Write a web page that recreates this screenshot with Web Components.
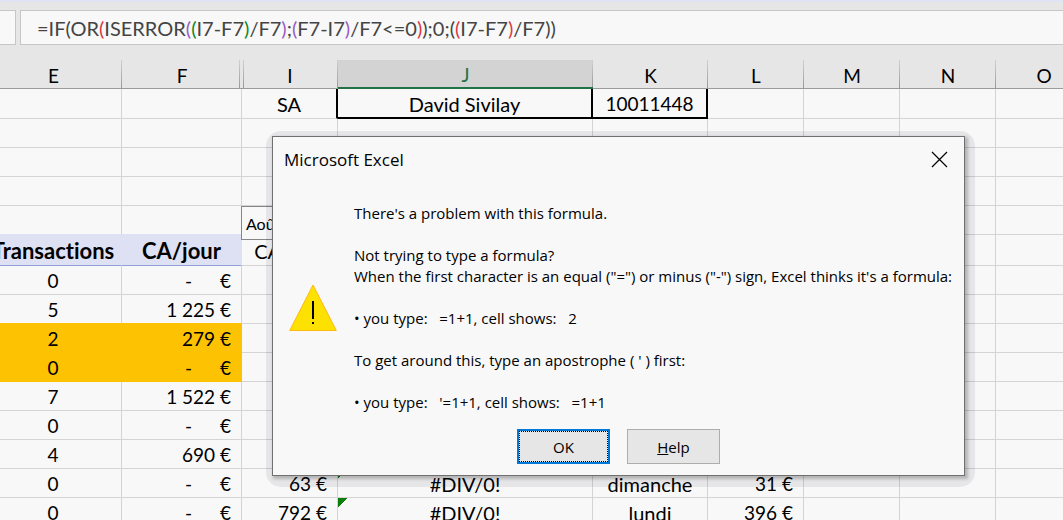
<!DOCTYPE html>
<html lang="en">
<head>
<meta charset="utf-8">
<title>Excel</title>
<style>
  body {
    margin: 0;
    height: 100vh;
    overflow: hidden;
    background: #f8f8f8;
    font-family: Lato, "Liberation Sans", sans-serif;
    font-variant-ligatures: none;
    color: #000;
  }
</style>
</head>
<body>
<excel-window>
  <formula-bar slot="bar" formula="=IF(OR(ISERROR((I7-F7)/F7);(F7-I7)/F7&lt;=0));0;((I7-F7)/F7))"></formula-bar>
  <sheet-grid></sheet-grid>
  <message-box slot="dialog" heading="Microsoft Excel">
    <p>There's a problem with this formula.</p>
    <p>Not trying to type a formula?<br>When the first character is an equal ("=") or minus ("-") sign, Excel thinks it's a formula:</p>
    <p>• you type:   =1+1, cell shows:   2</p>
    <p>To get around this, type an apostrophe ( ' ) first:</p>
    <p>• you type:   '=1+1, cell shows:   =1+1</p>
    <dialog-button slot="actions" primary>OK</dialog-button>
    <dialog-button slot="actions"><u>H</u>elp</dialog-button>
  </message-box>
</excel-window>

<script>
function attach(element, html) {
    const template = document.createElement('template');
    template.innerHTML = html;
    const root = element.attachShadow({mode: 'open'});
    root.appendChild(template.content.cloneNode(true));
    return root;
}

class ExcelWindow extends HTMLElement {
    constructor() {
        super();
        attach(this, `
<style>
  :host {
    display: flex;
    flex-direction: column;
    position: relative;
    height: 100%;
    overflow: hidden;
    background: #f8f8f8;
  }
  main { flex: 1; min-height: 0; overflow: hidden; }
</style>
<slot name="bar"></slot>
<main><slot></slot></main>
<slot name="dialog"></slot>`);
    }
}

class FormulaBar extends HTMLElement {
    constructor() {
        super();
        this._root = attach(this, `
<style>
  :host {
    display: flex;
    gap: 4px;
    padding: 8px 0 15px;
    border-top: 2px solid #dfe3f4;
    background: #e6e6e6;
  }
  input, .formula {
    box-sizing: border-box;
    height: 35px;
    border: 1px solid #c6c6c6;
    background: #f8f8f8;
  }
  input {
    width: 16px;
    padding: 0;
    border-left: 0;
    border-radius: 0;
  }
  .formula {
    flex: 1;
    padding-left: 16px;
    border-right: 0;
    font-size: 20px;
    line-height: 34px;
    white-space: pre;
    color: #444;
    outline: none;
  }
  .red { color: #d83a44; }
  .purple { color: #9a5cc6; }
  .green { color: #0b8a2a; }
</style>
<input aria-label="Name box">
<div class="formula" role="textbox" aria-label="Formula" contenteditable="true" spellcheck="false"></div>`);
    }

    connectedCallback() {
        // Each nesting level of brackets has its own colour
        const colors = ['', 'red', 'purple', 'green'];
        const box = this._root.querySelector('.formula');
        let depth = 0;

        for (const part of this.getAttribute('formula').split(/([()])/)) {
            const span = document.createElement('span');
            span.textContent = part;
            if (part === '(') {
                span.className = colors[depth++];
            } else if (part === ')') {
                span.className = colors[--depth];
            }
            box.appendChild(span);
        }
    }
}

const COLUMNS = ['E', 'F', 'I', 'J', 'K', 'L', 'M', 'N', 'O'];

// [row class, {column: text}]
const ROWS = [
    ['first', {I: 'SA', J: 'David Sivilay', K: '10011448'}],
    ['', {}],
    ['', {}],
    ['', {}],
    ['above', {}],
    ['titles', {E: 'Transactions', F: 'CA/jour', I: 'CA/jour'}],
    ['', {E: '0', F: '-'}],
    ['over', {E: '5', F: '1 225'}],
    ['marked', {E: '2', F: '279'}],
    ['marked', {E: '0', F: '-'}],
    ['', {E: '7', F: '1 522'}],
    ['', {E: '0', F: '-'}],
    ['', {E: '4', F: '690'}],
    ['error', {E: '0', F: '-', I: '63', J: '#DIV/0!', K: 'dimanche', L: '31'}],
    ['error', {E: '0', F: '-', I: '792', J: '#DIV/0!', K: 'lundi', L: '396'}],
];

class SheetGrid extends HTMLElement {
    constructor() {
        super();
        this._root = attach(this, `
<style>
  :host { display: block; position: relative; }
  table {
    margin-left: -15px;
    width: 1107px;
    min-width: calc(100% + 15px);
    table-layout: fixed;
    border-collapse: separate;
    border-spacing: 0;
    font-size: 20px;
    line-height: 26px;
    text-align: center;
    white-space: nowrap;
  }
  .E { width: 137px; }
  .F { width: 120px; }
  .I, .L, .M, .N { width: 96px; }
  .J { width: 255px; }
  .K { width: 115px; }
  th, td { box-sizing: border-box; padding: 1px 0 0; }
  th {
    height: 29px;
    padding-top: 3px;
    border-bottom: 1px solid #9b9b9b;
    background: linear-gradient(#d0d0d0, #999) right / 1px 100% no-repeat #e6e6e6;
    font-size: 19px;
    font-weight: 400;
    line-height: 24px;
  }
  /* G and H are hidden, so F and I meet in a double rule */
  th.F { background-position: right 2px top; }
  th.I {
    background:
      linear-gradient(#d0d0d0, #999) left 1px top / 1px 100% no-repeat,
      linear-gradient(#d0d0d0, #999) right / 1px 100% no-repeat #e6e6e6;
  }
  th.J {
    border-bottom: 2px solid #217346;
    background-color: #d3d3d3;
    color: #217346;
  }
  td {
    height: 29px;
    border-right: 1px solid #d4d4d4;
    border-bottom: 1px solid #d4d4d4;
  }
  .first td { height: 30px; }
  .first .I { border-right: 2px solid #000; }
  .first .J, .first .K {
    border-right: 2px solid #000;
    border-bottom: 2px solid #000;
  }
  .above .E, .above .F { border-bottom-color: #dde1f3; }
  .titles td { height: 31px; padding-top: 2px; }
  .titles .E, .titles .F {
    border-right-color: #dde1f3;
    border-bottom-color: #8ea2d8;
    background: #dde1f3;
    font-size: 22px;
    font-weight: 700;
  }
  .over .E, .over .F { border-bottom-color: #fdc303; }
  .marked .E, .marked .F { border-color: #fdc303; background: #fdc303; }
  td.money, tbody .E, .first .K { padding-top: 2px; font-size: 19px; }
  td.money { padding-right: 10px; text-align: right; }
  .dash { margin-right: 23px; }
  .error .J {
    background: linear-gradient(135deg, #0a7d0a 50%, transparent 50%) left top / 9px 9px no-repeat;
  }
  .tag {
    position: absolute;
    left: 241px;
    top: 146px;
    box-sizing: border-box;
    width: 96px;
    height: 34px;
    padding-left: 4px;
    border: 1px solid #868686;
    background: #f8f8f8;
    font-size: 16px;
    line-height: 34px;
  }
</style>
<table>
  <thead><tr></tr></thead>
  <tbody></tbody>
</table>
<div class="tag">Août</div>`);
    }

    connectedCallback() {
        const head = this._root.querySelector('thead tr');
        for (const name of COLUMNS) {
            const th = document.createElement('th');
            th.scope = 'col';
            th.className = name;
            th.textContent = name;
            head.appendChild(th);
        }

        const body = this._root.querySelector('tbody');
        for (const [kind, values] of ROWS) {
            const tr = document.createElement('tr');
            tr.className = kind;
            for (const name of COLUMNS) {
                tr.appendChild(this._cell(name, values[name] || ''));
            }
            body.appendChild(tr);
        }
    }

    _cell(name, text) {
        const td = document.createElement('td');
        td.className = name;
        if ('FIL'.includes(name) && /^[-\d]/.test(text)) {
            td.classList.add('money');
            td.innerHTML = text === '-' ? '<span class="dash">-</span> €' : text + ' €';
        } else {
            td.textContent = text;
        }
        return td;
    }
}

class MessageBox extends HTMLElement {
    constructor() {
        super();
        this._root = attach(this, `
<style>
  :host {
    display: block;
    position: absolute;
    left: 272px;
    top: 136px;
    z-index: 1;
    font-family: "Open Sans", "Noto Sans", sans-serif;
  }
  /* stepped shadow that falls down and to the right */
  :host::before {
    content: "";
    position: absolute;
    inset: -5px -10px -11px -6px;
    border-radius: 15px;
    background: rgba(30, 30, 50, .08);
  }
  section {
    position: relative;
    box-sizing: border-box;
    width: 693px;
    padding-bottom: 11px;
    border: 1px solid #707070;
    background: #f8f8f8;
    box-shadow: 2px 2px 3px 1px rgba(0, 0, 0, .22);
  }
  header {
    display: flex;
    justify-content: space-between;
    align-items: center;
    height: 44px;
    padding: 0 16px 0 11px;
  }
  h1 { margin: 0; font-size: 17px; font-weight: 400; }
  .close {
    display: flex;
    padding: 0;
    border: 0;
    background: none;
  }
  .content {
    display: flex;
    align-items: center;
    gap: 17px;
    padding: 22px 0 16px 16px;
  }
  .text { font-size: 15px; line-height: 21px; white-space: pre; }
  ::slotted(p) { margin: 0 0 21px; }
  ::slotted(p:last-of-type) { margin: 0; }
  svg { flex: none; }
  footer { display: flex; justify-content: center; gap: 17px; }
</style>
<section role="alertdialog" aria-labelledby="heading">
  <header>
    <h1 id="heading"></h1>
    <button class="close" aria-label="Close">
      <svg width="17" height="17" viewBox="0 0 17 17" stroke="#000" stroke-width="1.2"><path d="M1 1l15 15M16 1L1 16"/></svg>
    </button>
  </header>
  <div class="content">
    <svg width="48" height="48" viewBox="0 0 48 48">
      <path d="M24 1L47.300 46.500H.700z" fill="#fde100" stroke="#fdb913"/>
      <path d="M23 17h2v18h-2zM23 38h2v2h-2z"/>
    </svg>
    <div class="text"><slot></slot></div>
  </div>
  <footer><slot name="actions"></slot></footer>
</section>`);
    }

    connectedCallback() {
        this._root.querySelector('h1').textContent = this.getAttribute('heading');
        // Whitespace between the paragraphs would be kept by white-space: pre
        for (const node of [...this.childNodes]) {
            if (node.nodeType === Node.TEXT_NODE) {
                node.remove();
            }
        }
    }
}

class DialogButton extends HTMLElement {
    constructor() {
        super();
        attach(this, `
<style>
  :host { display: block; }
  button {
    box-sizing: border-box;
    width: 93px;
    height: 35px;
    padding: 2px 0 0;
    border: 1px solid #adadad;
    border-radius: 0;
    background: #e6e6e6;
    font: 15px/21px "Open Sans", "Noto Sans", sans-serif;
    color: #000;
  }
  :host([primary]) button {
    padding: 1px 0 0;
    border: 2px solid #0078d7;
    outline: 1px dotted #000;
    outline-offset: -3px;
  }
</style>
<button type="button"><slot></slot></button>`);
    }
}

window.customElements.define('excel-window', ExcelWindow);
window.customElements.define('formula-bar', FormulaBar);
window.customElements.define('sheet-grid', SheetGrid);
window.customElements.define('message-box', MessageBox);
window.customElements.define('dialog-button', DialogButton);
</script>
</body>
</html>
